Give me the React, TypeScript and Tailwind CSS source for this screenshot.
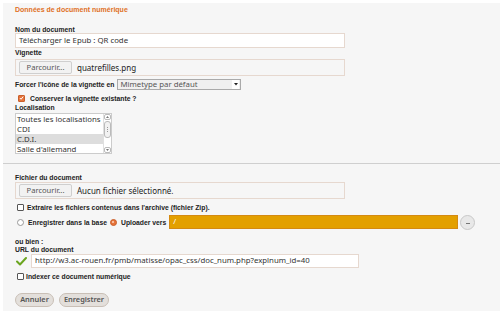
import React from "react";

const lab = "font-['Liberation_Sans',Arial,sans-serif] font-bold text-[6.8px] text-[#222] leading-[7px] h-[7px] whitespace-nowrap";
const inp = "font-['Noto_Sans',sans-serif] text-[7.8px] text-[#333] whitespace-nowrap";

function Check({ checked }: { checked?: boolean }) {
  if (checked)
    return (
      <div className="w-[7px] h-[7px] rounded-[1px] bg-[#e6733a] border border-[#c9602c] flex items-center justify-center shrink-0">
        <svg width="6" height="6" viewBox="0 0 6 6"><path d="M1 3 L2.5 4.5 L5 1.3" stroke="#fff" strokeWidth="1.2" fill="none" /></svg>
      </div>
    );
  return <div className="w-[7px] h-[7px] rounded-[1px] bg-white border border-[#555] shrink-0" />;
}

function Radio({ checked }: { checked?: boolean }) {
  if (checked)
    return (
      <div className="w-[7px] h-[7px] rounded-full bg-[#e6733a] border border-[#c9602c] flex items-center justify-center shrink-0">
        <div className="w-[2px] h-[2px] rounded-full bg-[#fbd3bd]" />
      </div>
    );
  return <div className="w-[7px] h-[7px] rounded-full bg-white border border-[#999] shrink-0" />;
}

function FileBox({ name }: { name: string }) {
  return (
    <div className="w-[330px] h-[17px] border border-[#e6d8cf] bg-[#f6f6f6] flex items-center pl-[3px]">
      <div className="h-[13px] w-[53px] border border-[#cfcfcf] rounded-[2px] bg-[#f2f2f2] flex items-center justify-center font-['Noto_Sans',sans-serif] text-[7.6px] text-[#555]">Parcourir...</div>
      <span className="ml-[5px] font-['Noto_Sans',sans-serif] text-[8px] text-[#222] whitespace-nowrap">{name}</span>
    </div>
  );
}

export default function App() {
  return (
    <div className="w-[500px] h-[319px] bg-white pt-[3px] pl-[3px] overflow-hidden">
      <div className="h-[308px] bg-[#f6f6f6] pt-[2px] pl-[12px] flex flex-col">
        <div className="font-['Liberation_Sans',Arial,sans-serif] font-bold text-[7px] leading-[9px] h-[9px] text-[#e0701f]">Données de document numérique</div>

        <div className={`${lab} mt-[12px]`}>Nom du document</div>
        <div className={`w-[330px] h-[15px] border border-[#e6d8cf] bg-white flex items-center pl-[3px] ${inp}`}>Télécharger le Epub : QR code</div>

        <div className={`${lab} mt-[1px]`}>Vignette</div>
        <div className="mt-[3px]"><FileBox name="quatrefilles.png" /></div>

        <div className="mt-[3px] h-[11px] flex items-center">
          <span className={lab}>Forcer l'icône de la vignette en</span>
          <div className={`ml-[3px] w-[124px] h-[11px] border border-[#aaa] bg-[#f0f0f0] flex items-center justify-between pl-[2px] ${inp} text-[#555]`}>
            <span>Mimetype par défaut</span>
            <div className="w-[7px] h-[9px] bg-white flex items-center justify-center mr-[1px]">
              <svg width="4" height="3" viewBox="0 0 4 3"><path d="M0 0 L4 0 L2 2.5 Z" fill="#222" /></svg>
            </div>
          </div>
        </div>

        <div className="mt-[4px] h-[8px] flex items-center pl-[3px] gap-[5px]">
          <Check checked />
          <span className={lab}>Conserver la vignette existante ?</span>
        </div>

        <div className={`${lab} mt-[2px]`}>Localisation</div>
        <div className="mt-[2px] w-[97px] h-[41px] border border-[#ccc] bg-white flex">
          <div className={`flex-1 flex flex-col ${inp} text-[#333] leading-[10px] overflow-hidden`}>
            <div className="pl-[1px] h-[10px]">Toutes les localisations</div>
            <div className="pl-[1px] h-[10px]">CDI</div>
            <div className="pl-[1px] h-[10px] bg-[#dddddd]">C.D.I.</div>
            <div className="pl-[1px] h-[10px]">Salle d'allemand</div>
          </div>
          <div className="w-[8px] flex flex-col items-center bg-white border-l border-[#e0e0e0]">
            <div className="w-[7px] h-[6px] rounded-[2px] border border-[#bbb] flex items-center justify-center">
              <svg width="3" height="2" viewBox="0 0 3 2"><path d="M0 2 L1.5 0 L3 2 Z" fill="#777" /></svg>
            </div>
            <div className="mt-[1px] w-[7px] h-[17px] rounded-[3px] border border-[#bbb] bg-[#f2f2f2] flex flex-col items-center justify-center gap-[1px]">
              <div className="w-[1px] h-[1px] bg-[#999]" />
              <div className="w-[1px] h-[1px] bg-[#999]" />
              <div className="w-[1px] h-[1px] bg-[#999]" />
            </div>
            <div className="flex-1" />
            <div className="w-[7px] h-[6px] rounded-[2px] border border-[#bbb] flex items-center justify-center">
              <svg width="3" height="2" viewBox="0 0 3 2"><path d="M0 0 L3 0 L1.5 2 Z" fill="#777" /></svg>
            </div>
          </div>
        </div>

        <div className="mt-[9px] -ml-[12px] h-[1px] bg-[#cfcfcf]" />

        <div className={`${lab} mt-[10px]`}>Fichier du document</div>
        <div className="mt-[1px]"><FileBox name="Aucun fichier sélectionné." /></div>

        <div className="mt-[4px] h-[8px] flex items-center pl-[2px] gap-[3px]">
          <Check />
          <span className={lab}>Extraire les fichiers contenus dans l'archive (fichier Zip).</span>
        </div>

        <div className="mt-[3px] h-[16px] flex items-center pl-[2px]">
          <Radio />
          <span className={`${lab} ml-[4px]`}>Enregistrer dans la base</span>
          <div className="ml-[3px]"><Radio checked /></div>
          <span className={`${lab} ml-[4px]`}>Uploader vers</span>
          <div className={`ml-[3px] w-[289px] h-[14px] bg-[#e3a000] border border-[#d48a12] flex items-center pl-[3px] ${inp} text-white`}>/</div>
          <div className="ml-[2px] w-[15px] h-[15px] rounded-full border border-[#c8c8c8] bg-[#e8e8e8] flex items-end justify-center pb-[5px]">
            <div className="w-[4px] h-[1px] bg-[#777]" />
          </div>
        </div>

        <div className={`${lab} mt-[8px]`}>ou bien :</div>
        <div className={`${lab} mt-[1px]`}>URL du document</div>

        <div className="mt-[1px] h-[14px] flex items-center">
          <svg width="11" height="9" viewBox="0 0 11 9" className="ml-[1px]">
            <path d="M1 4.5 L4 7.5 L10 1" stroke="#6aa51f" strokeWidth="2" fill="none" strokeLinecap="round" strokeLinejoin="round" />
          </svg>
          <div className={`ml-[4px] w-[328px] h-[14px] border border-[#e6d8cf] bg-white flex items-center pl-[3px] ${inp}`}>http://w3.ac-rouen.fr/pmb/matisse/opac_css/doc_num.php?explnum_id=40</div>
        </div>

        <div className="mt-[4px] h-[8px] flex items-center pl-[2px] gap-[2px]">
          <Check />
          <span className={lab}>Indexer ce document numérique</span>
        </div>

        <div className="mt-[13px] flex gap-[5px]">
          <div className="h-[14px] w-[39px] rounded-full border border-[#c9bfb6] bg-[#e3dfdb] flex items-center justify-center font-['Noto_Sans',sans-serif] font-semibold text-[7.4px] text-[#555]">Annuler</div>
          <div className="h-[14px] w-[50px] rounded-full border border-[#c9bfb6] bg-[#e3dfdb] flex items-center justify-center font-['Noto_Sans',sans-serif] font-semibold text-[7.4px] text-[#555]">Enregistrer</div>
        </div>
      </div>
    </div>
  );
}
